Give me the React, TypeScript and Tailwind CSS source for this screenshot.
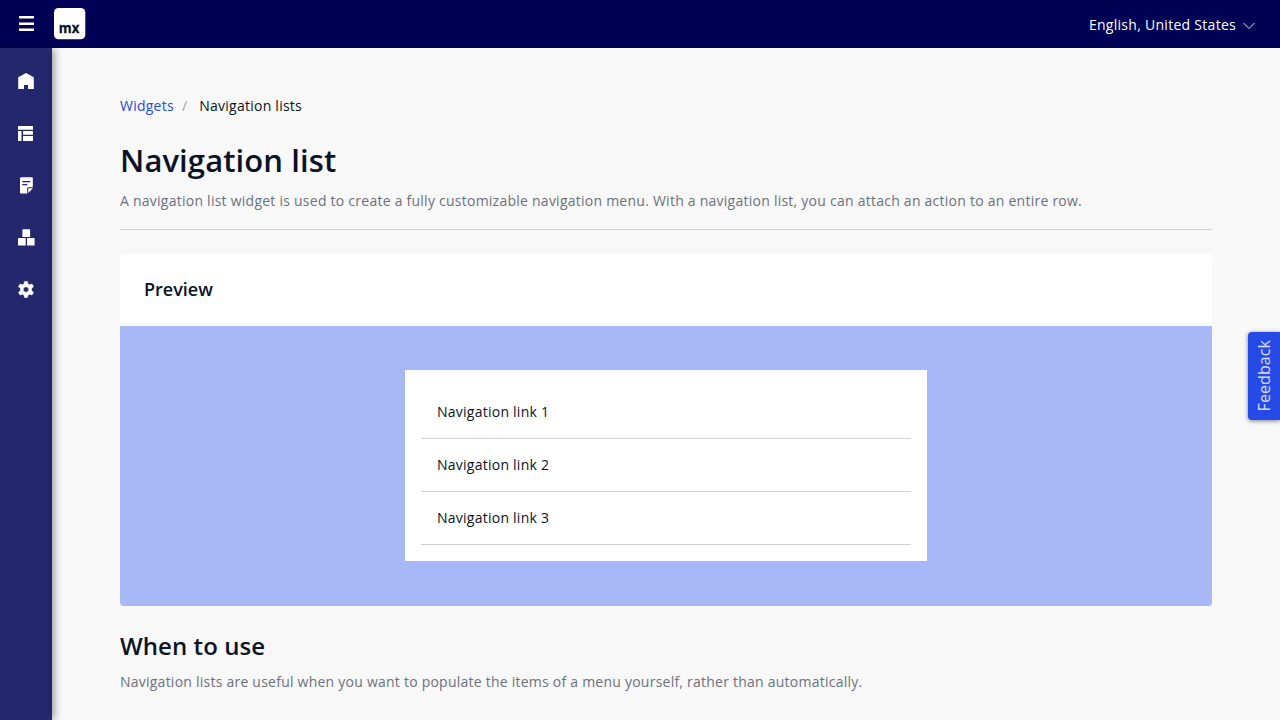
import React from "react";

const navIcons: React.ReactNode[] = [
  <path key="home" d="M.2 5.200 8 1.100l7.800 4.100V17H10v-4H6v4H.2z" />,
  <path key="layout" d="M0 2h15v3.700H0zM0 7h3.500v10H0zM5 7h10v3.700H5zM5 12h10v5H5z" />,
  <g key="note">
    <path d="M2 2q0-.8.8-.8h11.200q.8 0 .8.8v9.300H10q-.8 0-.8.8v5.500H2.800q-.8 0-.8-.8z" />
    <path d="M10.200 16.900V12.200h4.700z" />
    <path d="M4.300 5.600h8M4.300 8.600h5" stroke="#24276c" strokeWidth="1.2" />
  </g>,
  <path key="blocks" d="M4.900 1.300h6.700q.5 0 .5.5v6.600q0 .5-.5.5H4.900q-.5 0-.5-.5V1.800q0-.5.5-.5zM.4 10h6.900q.4 0 .4.400v6.800q0 .4-.4.400H.4q-.4 0-.4-.4v-6.800q0-.4.4-.4zM9.400 10h6.800q.4 0 .4.400v6.800q0 .4-.4.400H9.400q-.4 0-.4-.4v-6.800q0-.4.4-.4z" />,
  <path key="gear" transform="translate(0 1.500)" fillRule="evenodd" stroke="currentColor" strokeWidth=".5" strokeLinejoin="round" d="M6.500 0h3l.6 2.500 1.400.8 2.500-.8 1.500 2.600-1.900 1.800v2.200l1.900 1.800-1.500 2.600-2.500-.8-1.400.8-.6 2.500h-3l-.6-2.500-1.400-.8-2.500.8L.5 10.900l1.900-1.800V6.900L.5 5.100 2 2.500l2.500.8 1.400-.8zM8 5.300a2.700 2.700 0 1 0 0 5.400 2.700 2.700 0 0 0 0-5.400z" />,
];

const links = ["Navigation link 1", "Navigation link 2", "Navigation link 3"];

function TopBar() {
  return (
    <header className="flex h-12 shrink-0 items-center bg-[#000055] pr-6 pl-[19px] text-white">
      <svg width="15" height="16" viewBox="0 0 15 16" className="shrink-0" fill="currentColor">
        <path d="M0 .1h15v2.500H0zM0 6.500h15V9H0zM0 12.500h15V15H0z" />
      </svg>
      <svg width="32" height="32" viewBox="0 0 32 32" className="ml-5 shrink-0">
        <rect x="0" y="0" width="31.300" height="31.300" rx="4.500" fill="#fff" />
        <text x="4.800" y="25.400" fontFamily="Open Sans, sans-serif" fontWeight="700" fontSize="15" letterSpacing="0" textLength="20.500" lengthAdjust="spacingAndGlyphs" fill="#0a1325" stroke="#0a1325" strokeWidth=".3">mx</text>
      </svg>
      <div className="ml-auto flex items-center gap-[7px] pt-0.5">
        <span className="tracking-[0.28px]">English, United States</span>
        <svg width="13" height="8" viewBox="0 0 13 8" fill="none" stroke="#fff" strokeWidth=".9" className="mt-0.5">
          <path d="M.5 1 6 6.500l5.500-5.500" />
        </svg>
      </div>
    </header>
  );
}

function Sidebar() {
  return (
    <nav className="z-10 flex w-13 shrink-0 flex-col bg-[#24276c] pt-[7px] shadow-[2px_0_8px_rgba(0,0,0,0.4)]">
      {navIcons.map((icon, i) => (
        <a key={i} className="flex h-13 items-center pl-[18px] text-white">
          <svg width="17" height="18" viewBox="0 0 17 18" fill="currentColor">{icon}</svg>
        </a>
      ))}
    </nav>
  );
}

export default function App() {
  return (
    <div className="relative flex h-[720px] w-[1280px] flex-col overflow-hidden bg-[#f8f8f8] font-['Open_Sans',sans-serif] text-[14px] leading-5 tracking-[0.245px] text-[#0a1325]">
      <TopBar />
      <div className="flex min-h-0 flex-1">
        <Sidebar />
        <main className="min-w-0 flex-1 px-[68px] pt-12">
          <div className="flex">
            <a className="text-[#264ae5]">Widgets</a>
            <span className="px-2 text-[#9da1a8]">/</span>
            <span className="pl-1">Navigation lists</span>
          </div>
          <h1 className="mt-[21px] text-[31px] leading-[46px] font-semibold tracking-[0.1px]">Navigation list</h1>
          <p className="mt-2 text-[#6c717e]">A navigation list widget is used to create a fully customizable navigation menu. With a navigation list, you can attach an action to an entire row.</p>
          <hr className="mt-[18px] border-[#ced0d3]" />
          <section className="mt-6 overflow-hidden rounded">
            <h4 className="flex h-[72px] items-center bg-white px-6 pb-0.5 text-[18px] font-semibold tracking-normal">Preview</h4>
            <div className="flex h-[280px] justify-center bg-[#a8b7f5] pt-11">
              <ul className="h-[191px] w-[522px] bg-white p-4">
                {links.map((label) => (
                  <li key={label} className="flex h-[53px] items-center border-b border-[#ced0d3] px-4">{label}</li>
                ))}
              </ul>
            </div>
          </section>
          <h2 className="mt-6 text-[24px] leading-8 font-semibold tracking-[0.07px]">When to use</h2>
          <p className="mt-[10px] tracking-[0.235px] text-[#6c717e]">Navigation lists are useful when you want to populate the items of a menu yourself, rather than automatically.</p>
        </main>
      </div>
      <button className="absolute top-[332px] right-0 flex h-[87.5px] w-8 items-center justify-center rounded-l bg-[#264ae5] text-[16px] tracking-[0.08px] text-white/80 shadow-[0_1px_4px_rgba(0,0,0,0.5)]">
        <span className="rotate-180 [writing-mode:vertical-rl]">Feedback</span>
      </button>
    </div>
  );
}
